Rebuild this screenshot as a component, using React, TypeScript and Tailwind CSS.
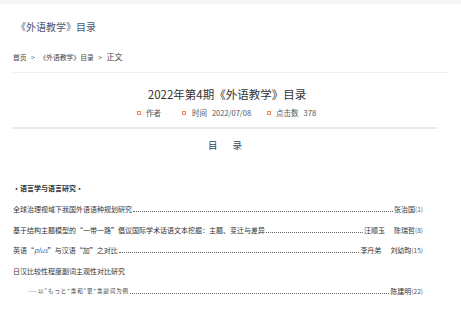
import React from 'react';

const font = { fontFamily: '"Noto Sans CJK SC", "Noto Sans", sans-serif' };

const Leader: React.FC = () => (
  <span className="flex-1 mx-[1px] mb-[2px] self-end border-b border-dotted border-[#666]" />
);

const Row: React.FC<{ title: React.ReactNode; authors: string[]; page: string; indent?: boolean }> = ({
  title,
  authors,
  page,
  indent,
}) => (
  <div className={`flex items-end h-[10px] leading-[10px] ${indent ? 'pl-[15px]' : ''}`}>
    <span className="whitespace-nowrap">{title}</span>
    <Leader />
    {authors.map((a, i) => (
      <span key={a} className={`whitespace-nowrap ${i > 0 ? 'ml-[9px]' : ''}`}>
        {a}
        {i === authors.length - 1 && <span className="text-[6.5px] text-[#555]">({page})</span>}
      </span>
    ))}
  </div>
);

const App: React.FC = () => {
  return (
    <div className="w-[461px] h-[317px] bg-white overflow-hidden text-[#333]" style={font}>
      <div className="h-[4px] bg-[#f5f5f5]" />

      <div className="px-[13px]">
        <div className="pt-[16px] pl-[3px] text-[10px] leading-[14px] text-[#4b5876]">《外语教学》目录</div>

        <div className="mt-[18px] flex items-center gap-[4.5px] text-[6.8px] leading-[10px] text-[#444] pb-[10px] border-b border-[#f0f0f0]">
          <span>首页</span>
          <span>&gt;</span>
          <span>《外语教学》目录</span>
          <span>&gt;</span>
          <span className="text-[8px]">正文</span>
        </div>

        <div className="mr-[11px]">
          <div className="mt-[13px] text-center text-[11.5px] leading-[16px] text-[#333] pl-[4px]">
            2022年第4期《外语教学》目录
          </div>

          <div className="mt-[6px] flex justify-center items-center text-[7.5px] leading-[10px] text-[#555] pl-[3px]">
            <span className="w-[4px] h-[4px] border border-[#f0875a]" />
            <span className="ml-[5px]">作者</span>
            <span className="w-[4px] h-[4px] border border-[#f0875a] ml-[21px]" />
            <span className="ml-[6px]">时间</span>
            <span className="ml-[5px]">2022/07/08</span>
            <span className="w-[4px] h-[4px] border border-[#f0875a] ml-[16px]" />
            <span className="ml-[5px]">点击数</span>
            <span className="ml-[5px]">378</span>
          </div>

          <div className="mt-[9px] border-b-2 border-[#e8e8e8]" />

          <div
            className="mt-[11px] flex justify-center gap-[15px] text-[9.5px] leading-[12px] text-[#34425e]"
            style={{ fontFamily: '"Liberation Serif", "Noto Sans CJK SC", serif' }}
          >
            <span>目</span>
            <span>录</span>
          </div>
        </div>

        <div className="mt-[31px] w-[410px] text-[7px]">
          <div className="font-bold leading-[10px] text-[#333]">·语言学与语言研究·</div>

          <div className="mt-[11px] flex flex-col gap-[10.5px]">
            <Row title="全球治理视域下我国外语语种规划研究" authors={['张治国']} page="1" />
            <Row
              title="基于结构主题模型的“一带一路”倡议国际学术话语文本挖掘：主题、变迁与差异"
              authors={['汪顺玉', '陈瑞哲']}
              page="8"
            />
            <Row
              title={
                <>
                  英语“<span className="italic text-[#5b6a96]">plus</span>”与汉语“加”之对比
                </>
              }
              authors={['李丹弟', '刘幼昀']}
              page="15"
            />
            <div className="h-[10px] leading-[10px]">日汉比较性程度副词主观性对比研究</div>
            <Row
              title={
                <span className="text-[5.5px] tracking-[0.9px] text-[#444]" style={{ fontFamily: '"Noto Sans CJK JP", sans-serif' }}>
                  ——以“もっと”类和“更”类副词为例
                </span>
              }
              authors={['陈建明']}
              page="22"
              indent
            />
          </div>
        </div>
      </div>
    </div>
  );
};

export default App;
